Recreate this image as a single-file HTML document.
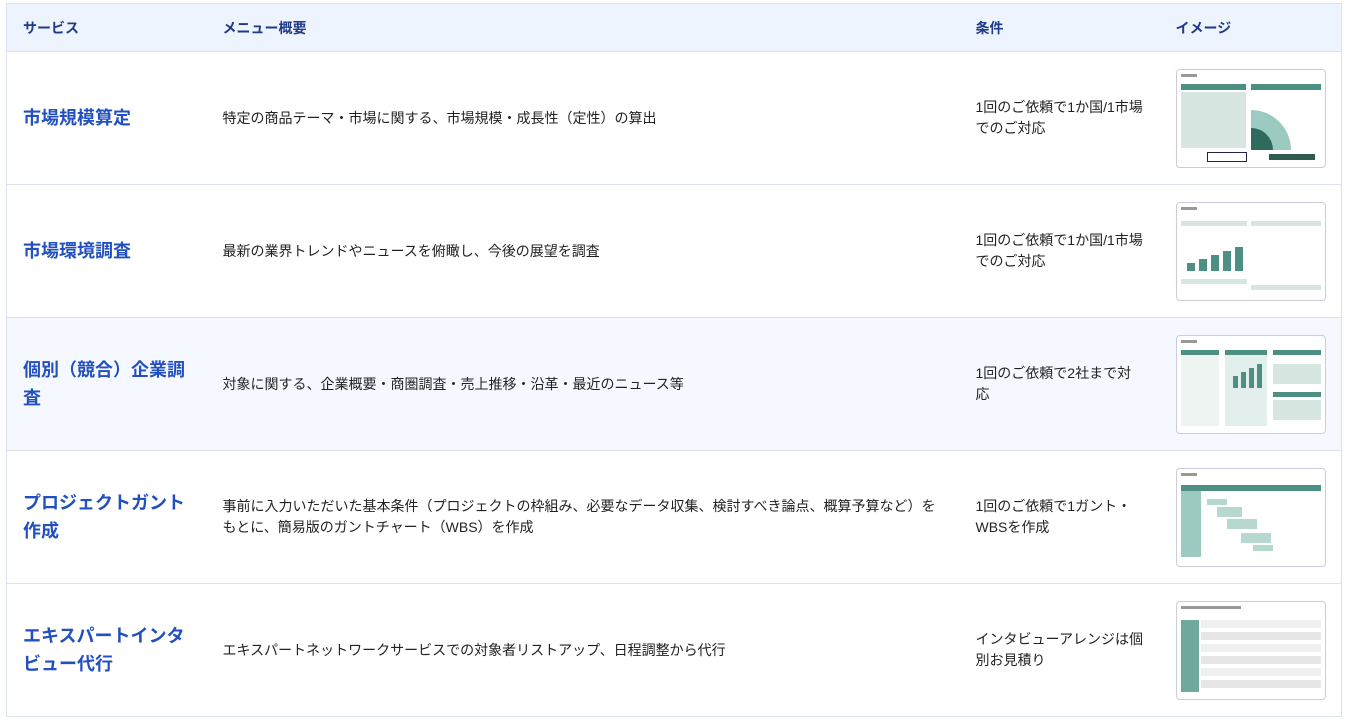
<!DOCTYPE html>
<html><head><meta charset="utf-8"><style>
body{margin:0;background:#fff;font-family:"Liberation Sans","Noto Sans CJK JP",sans-serif;}
table{position:absolute;left:6px;top:3px;width:1336px;border-collapse:collapse;border:1px solid #dde3ea;table-layout:fixed}
th{background:#eef4fd;color:#1f3a8a;font-size:14px;font-weight:bold;text-align:left;height:47px;padding:0;border-bottom:1px solid #dde3ea;}
td{height:132px;border-bottom:1px solid #dde3ea;padding:0;font-size:14px;color:#222;line-height:21px;vertical-align:middle}
tr.hl td{background:#f5f9ff}
.p1{padding-left:16px}
.svc{font-size:18px;font-weight:bold;color:#2350c0;line-height:28px;}
.th{width:148px;height:97px;border:1px solid #ccd;border-radius:4px;background:#fff;position:relative;overflow:hidden;margin-left:0}
.th .t{position:absolute;left:4px;top:4px;width:16px;height:3px;background:#999}
.th .a{position:absolute;background:#4e8f83}
.th .g{position:absolute;background:#d8e6e2}
</style></head><body>
<table>
<colgroup><col style="width:216px"><col style="width:753px"><col style="width:200px"><col></colgroup>
<tr><th class="p1">サービス</th><th>メニュー概要</th><th>条件</th><th>イメージ</th></tr>
<tr><td class="p1"><span class="svc">市場規模算定</span></td><td>特定の商品テーマ・市場に関する、市場規模・成長性（定性）の算出</td><td>1回のご依頼で1か国/1市場<br>でのご対応</td><td><div class="th"><div class="t"></div><div class="a" style="left:4px;top:14px;width:65px;height:6px"></div><div class="g" style="left:4px;top:22px;width:65px;height:56px"></div><div class="a" style="left:74px;top:14px;width:70px;height:6px"></div><div style="position:absolute;left:74px;top:40px;width:40px;height:40px;border-radius:0 40px 0 0;background:#9cc9c0"></div><div style="position:absolute;left:74px;top:58px;width:22px;height:22px;border-radius:0 22px 0 0;background:#2f6a5e"></div><div style="position:absolute;left:30px;top:82px;width:38px;height:8px;border:1px solid #224;"></div><div class="a" style="left:92px;top:84px;width:46px;height:6px;background:#2f5a50"></div></div></td></tr>
<tr><td class="p1"><span class="svc">市場環境調査</span></td><td>最新の業界トレンドやニュースを俯瞰し、今後の展望を調査</td><td>1回のご依頼で1か国/1市場<br>でのご対応</td><td><div class="th"><div class="t"></div><div class="g" style="left:4px;top:18px;width:66px;height:5px"></div><div class="g" style="left:74px;top:18px;width:70px;height:5px"></div><div class="a" style="left:10px;top:60px;width:8px;height:8px"></div><div class="a" style="left:22px;top:56px;width:8px;height:12px"></div><div class="a" style="left:34px;top:52px;width:8px;height:16px"></div><div class="a" style="left:46px;top:48px;width:8px;height:20px"></div><div class="a" style="left:58px;top:44px;width:8px;height:24px"></div><div class="g" style="left:4px;top:76px;width:66px;height:5px"></div><div class="g" style="left:74px;top:82px;width:70px;height:5px"></div></div></td></tr>
<tr class="hl"><td class="p1"><span class="svc">個別（競合）企業調<br>査</span></td><td>対象に関する、企業概要・商圏調査・売上推移・沿革・最近のニュース等</td><td>1回のご依頼で2社まで対<br>応</td><td><div class="th"><div class="t"></div><div class="g" style="left:4px;top:14px;width:38px;height:76px;background:#eef4f2"></div><div class="a" style="left:4px;top:14px;width:38px;height:5px"></div><div class="g" style="left:48px;top:14px;width:42px;height:76px;background:#e3efec"></div><div class="a" style="left:48px;top:14px;width:42px;height:5px"></div><div class="a" style="left:56px;top:40px;width:5px;height:12px"></div><div class="a" style="left:64px;top:36px;width:5px;height:16px"></div><div class="a" style="left:72px;top:32px;width:5px;height:20px"></div><div class="a" style="left:80px;top:28px;width:5px;height:24px"></div><div class="a" style="left:96px;top:14px;width:48px;height:5px"></div><div class="g" style="left:96px;top:28px;width:48px;height:20px"></div><div class="a" style="left:96px;top:56px;width:48px;height:5px"></div><div class="g" style="left:96px;top:64px;width:48px;height:20px"></div></div></td></tr>
<tr><td class="p1"><span class="svc">プロジェクトガント<br>作成</span></td><td>事前に入力いただいた基本条件（プロジェクトの枠組み、必要なデータ収集、検討すべき論点、概算予算など）を<br>もとに、簡易版のガントチャート（WBS）を作成</td><td>1回のご依頼で1ガント・<br>WBSを作成</td><td><div class="th"><div class="t"></div><div class="a" style="left:4px;top:16px;width:140px;height:6px"></div><div class="g" style="left:4px;top:22px;width:20px;height:66px;background:#9cc9c0"></div><div class="g" style="left:30px;top:30px;width:20px;height:6px;background:#b7d8d1"></div><div class="g" style="left:40px;top:38px;width:25px;height:10px;background:#b7d8d1"></div><div class="g" style="left:50px;top:50px;width:30px;height:10px;background:#b7d8d1"></div><div class="g" style="left:64px;top:64px;width:30px;height:10px;background:#b7d8d1"></div><div class="g" style="left:76px;top:76px;width:20px;height:6px;background:#b7d8d1"></div></div></td></tr>
<tr><td class="p1"><span class="svc">エキスパートインタ<br>ビュー代行</span></td><td>エキスパートネットワークサービスでの対象者リストアップ、日程調整から代行</td><td>インタビューアレンジは個<br>別お見積り</td><td><div class="th"><div class="t" style="width:60px"></div><div class="a" style="left:4px;top:18px;width:18px;height:72px;background:#6fa89c"></div><div class="g" style="left:24px;top:18px;width:120px;height:8px;background:#f0f0f0"></div><div class="g" style="left:24px;top:30px;width:120px;height:8px;background:#e6e6e6"></div><div class="g" style="left:24px;top:42px;width:120px;height:8px;background:#f0f0f0"></div><div class="g" style="left:24px;top:54px;width:120px;height:8px;background:#e6e6e6"></div><div class="g" style="left:24px;top:66px;width:120px;height:8px;background:#f0f0f0"></div><div class="g" style="left:24px;top:78px;width:120px;height:8px;background:#e6e6e6"></div></div></td></tr>
</table>
</body></html>
